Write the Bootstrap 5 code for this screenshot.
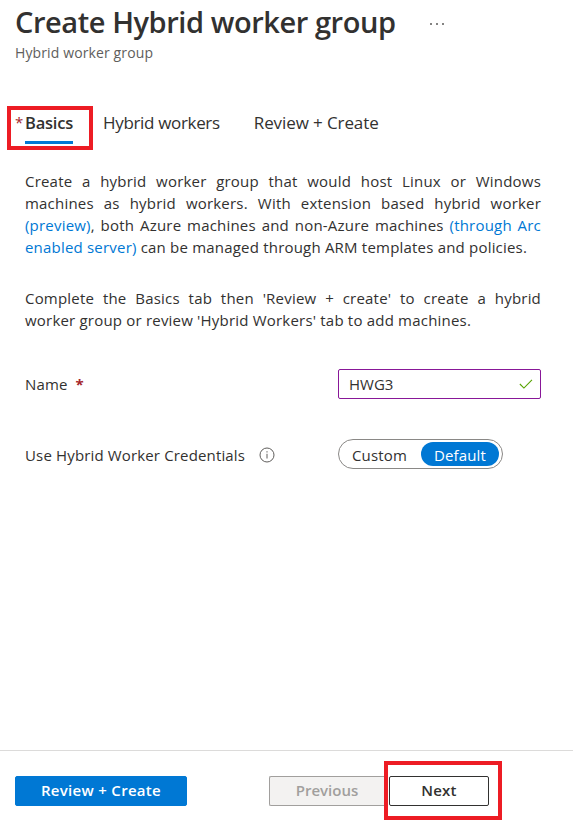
<!DOCTYPE html>
<html lang="en">
<head>
<meta charset="utf-8">
<meta name="viewport" content="width=device-width, initial-scale=1">
<title>Create Hybrid worker group</title>
<link href="https://cdn.jsdelivr.net/npm/bootstrap@5.3.0/dist/css/bootstrap.min.css" rel="stylesheet">
<style>
  body { font-family: "Segoe UI", "Open Sans", "Noto Sans", sans-serif; font-size: 15px; line-height: 22px; color: #323130; background: #fff; }
  .page-head { padding: 2px 15px 0; }
  .page-title { font-size: 29px; line-height: 40px; font-weight: 600; letter-spacing: -.43px; }
  .page-sub { font-size: 14px; line-height: 20px; color: #605e5c; letter-spacing: .12px; margin-top: 1px; }
  .more { margin: 5px 0 0 33px; color: #323130; }
  .wizard-tabs { margin-top: 43px; padding-left: 7px; font-size: 17px; line-height: 24px; }
  .wizard-tabs .nav-link { color: #323130; padding: 0; }
  .wizard-tabs .nav-link.active { font-weight: 600; padding: 0 0 6px; border-bottom: 3px solid #0078d4; font-size: 16.5px; letter-spacing: -.21px; }
  .tab-workers { margin: 5px 0 0 10px; letter-spacing: -.33px; }
  .tab-review { margin: 5px 0 0 34px; letter-spacing: -.1px; }
  .callout { border: 4px solid #ed1c24; }
  .callout-tab { width: 86px; height: 44px; padding: 1px 0 0 4px; }
  .req { color: #a4262c; }
  .tab-req { width: 10px; font-size: 15px; line-height: 22px; }
  .form-area { padding: 20px 32px 0 25px; }
  .intro { text-align: justify; letter-spacing: .2px; margin: 0 0 29px; }
  .intro a { color: #0078d4; text-decoration: none; }
  .row-name { margin-top: 38px; }
  .row-cred { margin-top: 40px; }
  .field-label { width: 313px; letter-spacing: .15px; }
  .row-cred .field-label, .pill-toggle > span { padding-top: 1px; }
  .info { margin: 1px 0 0 14px; }
  .name-input { width: 203px; height: 30px; border: 1px solid #881798; border-radius: 2px; padding: 0 7px 0 10px; }
  .name-input input { min-width: 0; color: #323130; font-size: 15px; line-height: 20px; }
  .pill-toggle { width: 165px; height: 30px; border: 1px solid #8a8886; padding: 2px 3px 2px 13px; letter-spacing: .15px; }
  .pill-on { width: 78px; height: 24px; line-height: 24px; background: #0078d4; }
  .foot { height: 75px; border-top: 1px solid #dcdbda; padding-left: 15px; }
  .foot .btn { height: 30px; padding: 0 0 2px; font-size: 15px; font-weight: 600; line-height: 26px; border-radius: 2px; }
  .btn-create { width: 172px; background: #0078d4; border-color: #0078d4; color: #fff; margin-top: 25px; letter-spacing: .3px; }
  .btn-prev { width: 115px; margin: 25px 0 0 82px; }
  .foot .btn-prev:disabled { background: #f3f2f1; border-color: #a19f9d; color: #a19f9d; opacity: 1; border-right: 0; border-radius: 2px 0 0 2px; }
  .callout-next { width: 118px; height: 59px; margin-top: 10px; padding: 11px 0 0 1px; }
  .btn-next { width: 100px; border-color: #323130; color: #323130; background: #fff; letter-spacing: .2px; }
</style>
</head>
<body class="m-0">
<div class="d-flex flex-column vh-100 overflow-hidden">
  <header class="page-head">
    <div class="d-flex align-items-center">
      <h1 class="page-title m-0 text-nowrap">Create Hybrid worker group</h1>
      <svg class="more" width="16" height="6" viewBox="0 0 16 6" fill="currentColor" aria-label="More"><path d="M1.2 1.2h1.6v1.6H1.2zM7.2 1.2h1.6v1.6H7.2zM13.2 1.2h1.6v1.6h-1.6z"/></svg>
    </div>
    <div class="page-sub">Hybrid worker group</div>
  </header>
  <nav class="wizard-tabs d-flex align-items-start text-nowrap">
    <div class="callout callout-tab d-flex">
      <span class="req tab-req">*</span>
      <a class="nav-link active align-self-start" href="#">Basics</a>
    </div>
    <a class="nav-link tab-workers" href="#">Hybrid workers</a>
    <a class="nav-link tab-review" href="#">Review + Create</a>
  </nav>
  <main class="form-area flex-grow-1">
    <p class="intro">Create a hybrid worker group that would host Linux or Windows machines as hybrid workers. With extension based hybrid worker <a href="#">(preview)</a>, both Azure machines and non-Azure machines <a href="#">(through Arc enabled server)</a> can be managed through ARM templates and policies.</p>
    <p class="intro">Complete the Basics tab then 'Review + create' to create a hybrid <span class="text-nowrap">worker group</span> or review 'Hybrid Workers' tab to add machines.</p>
    <div class="d-flex align-items-center row-name">
      <label class="field-label" for="name">Name <b class="req ms-1">*</b></label>
      <div class="name-input d-flex align-items-center">
        <input id="name" class="border-0 p-0 flex-grow-1 bg-transparent" value="HWG3">
        <svg width="16" height="12" viewBox="0 0 16 12" fill="none" stroke="#57a300" stroke-width="1.3"><path d="M1 6l4.7 4.7L15 1.2"/></svg>
      </div>
    </div>
    <div class="d-flex align-items-center row-cred">
      <div class="field-label d-flex align-items-center"><span>Use Hybrid Worker Credentials</span>
        <svg class="info" width="16" height="16" viewBox="0 0 16 16" fill="none" stroke="#605e5c"><circle cx="8" cy="8" r="7"/><path d="M8 6.8v4.7M8 4.2v1.3"/></svg>
      </div>
      <div class="pill-toggle rounded-pill d-flex align-items-center justify-content-between">
        <span>Custom</span>
        <span class="pill-on rounded-pill text-white text-center">Default</span>
      </div>
    </div>
  </main>
  <footer class="foot d-flex align-items-start flex-shrink-0">
    <button class="btn btn-create">Review + Create</button>
    <button class="btn btn-prev" disabled>Previous</button>
    <div class="callout callout-next"><button class="btn btn-next">Next</button></div>
  </footer>
</div>
<script src="https://cdn.jsdelivr.net/npm/bootstrap@5.3.0/dist/js/bootstrap.bundle.min.js"></script>
</body>
</html>
